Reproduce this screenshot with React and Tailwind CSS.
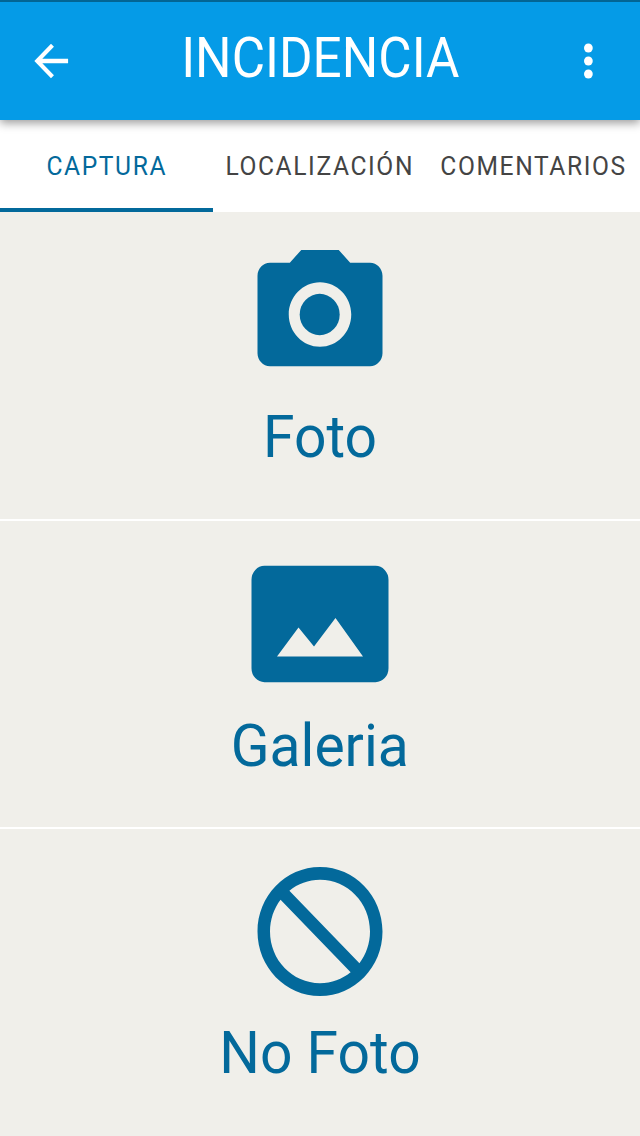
import { useState } from "react";

const TABS = ["CAPTURA", "LOCALIZACIÓN", "COMENTARIOS"];

function BackIcon() {
  return (
    <svg className="h-[52px] w-[50px]" viewBox="0 0 24 24" preserveAspectRatio="none" fill="currentColor">
      <path d="M20.200 11H7.830l5.590-5.590L12 4l-8 8 8 8 1.410-1.410L7.830 13H20.200v-2z" />
    </svg>
  );
}

function MoreIcon() {
  return (
    <svg className="h-[52px] w-[50px]" viewBox="0 0 24 24" preserveAspectRatio="none" fill="currentColor">
      <circle cx="11.700" cy="6" r="2.1" />
      <circle cx="11.700" cy="12" r="2.1" />
      <circle cx="11.700" cy="18" r="2.1" />
    </svg>
  );
}

function CameraIcon() {
  return (
    <svg className="h-[155px] w-[150px]" viewBox="0 0 24 24" preserveAspectRatio="none" fill="currentColor">
      <circle cx="11.950" cy="12" r="3.2" />
      <path d="M9 2L7.170 4H4c-1.100 0-2 .9-2 2v12c0 1.100.9 2 2 2h16c1.100 0 2-.9 2-2V6c0-1.100-.9-2-2-2h-3.170L15 2H9zm3 15c-2.760 0-5-2.240-5-5s2.240-5 5-5 5 2.240 5 5-2.240 5-5 5z" />
    </svg>
  );
}

function GalleryIcon() {
  return (
    <svg className="h-[155px] w-[150px]" viewBox="0 0 150 155" fill="currentColor">
      <path
        fillRule="evenodd"
        d="M19.500 19.800H130.500a13 14 0 0 1 13 14V122.200a13 14 0 0 1-13 14H19.500a13 14 0 0 1-13-14V33.800a13 14 0 0 1 13-14zM32 110.500H118L90.500 72 69 100.500 53.500 81.500z"
      />
    </svg>
  );
}

function BlockIcon() {
  return (
    <svg className="h-[155px] w-[150px]" viewBox="0 0 24 24" preserveAspectRatio="none" fill="currentColor">
      <path d="M12 2C6.480 2 2 6.480 2 12s4.480 10 10 10 10-4.480 10-10S17.520 2 12 2zM4 12c0-4.420 3.580-8 8-8 1.850 0 3.550.630 4.900 1.690L5.690 16.900C4.630 15.550 4 13.850 4 12zm8 8c-1.850 0-3.550-.630-4.900-1.690L18.310 7.100C19.370 8.450 20 10.150 20 12c0 4.420-3.580 8-8 8z" transform="matrix(-1 0 0 1 24 0)" />
    </svg>
  );
}

const OPTIONS = [
  { label: "Foto", Icon: CameraIcon, row: "h-[309px] border-b-2", text: "leading-[89px]" },
  { label: "Galeria", Icon: GalleryIcon, row: "h-[308px] border-b-2", text: "leading-[90px]" },
  { label: "No Foto", Icon: BlockIcon, row: "h-[307px]", text: "leading-[88px]" },
];

export default function App() {
  const [active, setActive] = useState(0);

  return (
    <div className="flex h-[1136px] w-[640px] flex-col overflow-hidden bg-[#f0efea] font-[Roboto,sans-serif]">
      <header className="z-10 flex h-[119.5px] shrink-0 items-center justify-between border-t-2 border-[#036594] bg-[#059be7] px-[26px] text-white shadow-[0_3px_9px_rgba(0,0,0,0.4)]">
        <button aria-label="Volver">
          <BackIcon />
        </button>
        <h1 className="mb-[4px] scale-x-[0.932] text-[55px] leading-none whitespace-nowrap">INCIDENCIA</h1>
        <button aria-label="Más opciones">
          <MoreIcon />
        </button>
      </header>

      <nav className="grid h-[92px] shrink-0 grid-cols-3 bg-white">
        {TABS.map((tab, i) => (
          <button
            key={tab}
            onClick={() => setActive(i)}
            className={`flex items-center justify-center border-b-4 pt-[6px] ${
              i === active ? "border-[#03699b] text-[#03699b]" : "border-transparent text-[#444444]"
            }`}
          >
            <span className="scale-x-[0.946] text-[26px] tracking-[1.7px] whitespace-nowrap">{tab}</span>
          </button>
        ))}
      </nav>

      <main className="flex flex-col text-[#03699b]">
        {OPTIONS.map(({ label, Icon, row, text }) => (
          <button key={label} className={`flex flex-col items-center border-white pt-[25px] ${row}`}>
            <Icon />
            <span className={`scale-x-[0.95] text-[60px] ${text}`}>{label}</span>
          </button>
        ))}
      </main>
    </div>
  );
}
